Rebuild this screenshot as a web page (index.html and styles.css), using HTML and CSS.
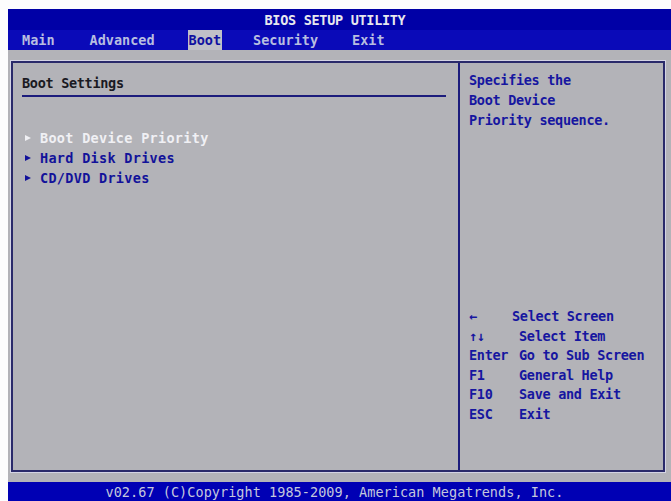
FILE: index.html
```html
<!DOCTYPE html>
<html lang="en">
<head>
  <meta charset="UTF-8" />
  <title>BIOS Setup Utility</title>
  <link rel="stylesheet" href="styles.css">
</head>
<body>

<div class="screen">
  <div class="title-bar">BIOS SETUP UTILITY</div>

  <div class="menu-bar">
    <span class="tab tab-main">Main</span>
    <span class="tab tab-advanced">Advanced</span>
    <span class="tab tab-boot active">Boot</span>
    <span class="tab tab-security">Security</span>
    <span class="tab tab-exit">Exit</span>
  </div>

  <div class="body-area">
    <div class="panel">
      <div class="left-col">
        <div class="section-title">Boot Settings</div>
        <div class="rule"></div>
        <ul class="options">
          <li class="selected"><span class="arrow"></span>Boot Device Priority</li>
          <li><span class="arrow"></span>Hard Disk Drives</li>
          <li><span class="arrow"></span>CD/DVD Drives</li>
        </ul>
      </div>

      <div class="right-col">
        <div class="help">
          <p>Specifies the</p>
          <p>Boot Device</p>
          <p>Priority sequence.</p>
        </div>

        <div class="keys">
          <div class="key-row"><span class="key">&larr;</span><span class="desc shift">Select Screen</span></div>
          <div class="key-row"><span class="key">&uarr;&darr;</span><span class="desc">Select Item</span></div>
          <div class="key-row"><span class="key">Enter</span><span class="desc">Go to Sub Screen</span></div>
          <div class="key-row"><span class="key">F1</span><span class="desc">General Help</span></div>
          <div class="key-row"><span class="key">F10</span><span class="desc">Save and Exit</span></div>
          <div class="key-row"><span class="key">ESC</span><span class="desc">Exit</span></div>
        </div>
      </div>
    </div>
  </div>

  <div class="footer">v02.67 (C)Copyright 1985-2009, American Megatrends, Inc.</div>
</div>

</body>
</html>
```

FILE: styles.css
```css
body {
  margin: 0;
  background: #fdfdfd;
  font-family: "DejaVu Sans Mono", "Liberation Mono", monospace;
  font-weight: bold;
  font-size: 13.5px;
}

.screen {
  margin: 9px 0 0 8px;
  width: 663px;
  height: 492px;
  display: flex;
  flex-direction: column;
  background: #b3b3b8;
}

.title-bar {
  height: 21px;
  line-height: 22px;
  padding-right: 9px;
  background: #0000a6;
  color: #e8e8ee;
  text-align: center;
  letter-spacing: -0.3px;
}

.menu-bar {
  height: 20px;
  background: #0a0ab8;
  display: flex;
  align-items: stretch;
  padding-left: 14px;
}

.tab {
  color: #b8bee0;
  line-height: 20px;
}

.tab-advanced { margin-left: 35px; }
.tab-boot { margin-left: 33px; }
.tab-security { margin-left: 31px; }
.tab-exit { margin-left: 34px; }

.tab.active {
  background: #c0c0c8;
  color: #1010a0;
  padding: 0 1px;
}

.body-area {
  flex: 1;
  padding: 11px 6px 10px 3px;
  display: flex;
}

.panel {
  flex: 1;
  display: flex;
  border: 2px solid #2a2a6a;
  box-shadow: 0 0 0 1px #d4d4e4;
}

.left-col {
  width: 447px;
  border-right: 2px solid #1c1c7c;
  padding: 11px 0 0 9px;
  box-sizing: border-box;
}

.section-title {
  color: #1a1a22;
  height: 21px;
  line-height: 18px;
  letter-spacing: -0.3px;
}

.rule {
  margin-right: 12px;
  border-top: 2px solid #1c1c7c;
}

.options {
  list-style: none;
  margin: 31px 0 0 3px;
  padding: 0;
}

.options li {
  color: #12129a;
  height: 20px;
  line-height: 20px;
  letter-spacing: 0.3px;
}

.options li.selected {
  color: #f0f0f4;
}

/* small solid pointer in front of each submenu entry */
.arrow {
  display: inline-block;
  width: 0;
  height: 0;
  margin-right: 9px;
  border-left: 6px solid currentColor;
  border-top: 3.5px solid transparent;
  border-bottom: 3.5px solid transparent;
  vertical-align: 2px;
}

.right-col {
  flex: 1;
  padding: 7px 0 0 9px;
  display: flex;
  flex-direction: column;
  color: #1616a0;
}

.help p {
  margin: 0;
  line-height: 20px;
  letter-spacing: -0.3px;
}

.keys {
  margin-top: 177px;
}

.key-row {
  display: flex;
  line-height: 19.5px;
  letter-spacing: -0.3px;
}

.key {
  width: 50px;
}

.desc.shift {
  margin-left: -7px;
}

.footer {
  height: 19px;
  line-height: 20px;
  padding-right: 10px;
  background: #0000b4;
  color: #c4c8dc;
  text-align: center;
  font-weight: normal;
  letter-spacing: 0.05px;
}
```
